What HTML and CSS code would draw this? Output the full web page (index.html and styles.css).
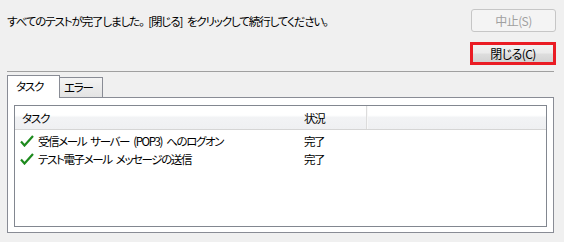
FILE: index.html
```html
<!DOCTYPE html>
<html lang="ja">
<head>
<meta charset="utf-8">
<link rel="stylesheet" href="styles.css">
</head>
<body>
<div class="dialog">
  <div class="top-row">
    <div class="message">すべてのテストが完了しました。 [閉じる] をクリックして続行してください。</div>
    <button class="btn btn-disabled" disabled>中止(S)</button>
  </div>
  <div class="close-row">
    <div class="highlight"><button class="btn btn-close">閉じる(C)</button></div>
  </div>
  <div class="separator"></div>
  <div class="tabs">
    <div class="tab tab-active">タスク</div>
    <div class="tab">エラー</div>
  </div>
  <div class="panel">
    <div class="list">
      <div class="list-header">
        <div class="hcell hcell-task">タスク</div>
        <div class="hcell hcell-status">状況</div>
        <div class="hdivider"></div>
      </div>
      <div class="list-row">
        <div class="cell cell-task">
          <svg class="check" width="14" height="12" viewBox="0 0 14 12"><path d="M1 6.5 L4.5 10.5 L13 1" fill="none" stroke="#1d8a1d" stroke-width="2.2" stroke-linejoin="miter"/></svg>
          <span>受信メール サーバー (POP3) へのログオン</span>
        </div>
        <div class="cell">完了</div>
      </div>
      <div class="list-row">
        <div class="cell cell-task">
          <svg class="check" width="14" height="12" viewBox="0 0 14 12"><path d="M1 6.5 L4.5 10.5 L13 1" fill="none" stroke="#1d8a1d" stroke-width="2.2" stroke-linejoin="miter"/></svg>
          <span>テスト電子メール メッセージの送信</span>
        </div>
        <div class="cell">完了</div>
      </div>
    </div>
  </div>
</div>
</body>
</html>
```

FILE: styles.css
```css
html, body {
  margin: 0;
  padding: 0;
  background: #f0f0f0;
}
body {
  font-family: "Noto Sans CJK JP", "Noto Sans", sans-serif;
  font-size: 11.5px;
  letter-spacing: -1.2px;
  word-spacing: 3px;
  color: #000;
  font-feature-settings: "palt";
  width: 564px;
  height: 242px;
  overflow: hidden;
}
.dialog {
  padding: 9px 8px 0 7px;
}
.top-row {
  display: flex;
  align-items: center;
  justify-content: space-between;
  height: 23px;
}
.message {
  line-height: 16px;
  margin-top: 1px;
  letter-spacing: -1.1px;
}
.btn {
  font-family: inherit;
  font-size: 12px;
  letter-spacing: -0.6px;
  font-feature-settings: "palt";
  margin: 0;
  padding: 0;
  box-sizing: border-box;
  border-radius: 3px;
}
.btn-disabled {
  width: 85px;
  height: 23px;
  border: 1px solid #c6c6c6;
  background: #f4f4f4;
  color: #a0a0a0;
}
.close-row {
  display: flex;
  justify-content: flex-end;
  margin-top: 10px;
}
.highlight {
  border: 3px solid #ea1c24;
  width: 86px;
  height: 23px;
  box-sizing: border-box;
  display: flex;
}
.btn-close {
  width: 80px;
  height: 17px;
  border: none;
  border-radius: 0;
  background: linear-gradient(#f2f2f2 0%, #ebebeb 45%, #dddddd 55%, #d2d2d2 100%);
  color: #000;
  line-height: 17px;
}
.separator {
  margin-top: 6px;
  margin-right: 2px;
  height: 1px;
  background: #a0a0a0;
}
.tabs {
  display: flex;
  margin-top: 3px;
  height: 22px;
  align-items: flex-end;
  position: relative;
  z-index: 1;
}
.tab {
  box-sizing: border-box;
  border: 1px solid #898c95;
  border-bottom: none;
  height: 20px;
  width: 44px;
  padding-left: 4px;
  line-height: 19px;
  background: linear-gradient(#f4f4f4, #e3e3e3);
  margin-left: -1px;
}
.tab-active {
  background: #fff;
  height: 23px;
  width: 53px;
  padding-left: 8px;
  margin-left: 0;
  margin-bottom: -1px;
  line-height: 21px;
  z-index: 2;
  position: relative;
}
.panel {
  margin-right: 2px;
  height: 136px;
  box-sizing: border-box;
  border: 1px solid #898c95;
  background: #fff;
  padding: 7px 6px 5px 6px;
}
.list {
  box-sizing: border-box;
  height: 122px;
  border: 1px solid #828790;
  background: #fff;
}
.list-header {
  display: flex;
  height: 23px;
  background: linear-gradient(#ffffff 0%, #ffffff 40%, #f2f3f5 50%, #eff0f2 100%);
  border-bottom: 1px solid #d5d5d5;
  line-height: 24px;
}
.hcell-task {
  width: 282px;
  padding-left: 7px;
}
.hcell-status {
  width: 62px;
}
.hdivider {
  width: 2px;
  background: linear-gradient(90deg, #dcdcdc 50%, #f8f8f8 50%);
}
.list-row {
  display: flex;
  height: 18px;
  line-height: 18px;
  letter-spacing: -1.4px;
}
.list-header + .list-row {
  margin-top: 2px;
}
.cell-task {
  width: 284px;
  padding-left: 5px;
  display: flex;
  align-items: center;
}
.check {
  margin-right: 4px;
  flex: none;
}
```
